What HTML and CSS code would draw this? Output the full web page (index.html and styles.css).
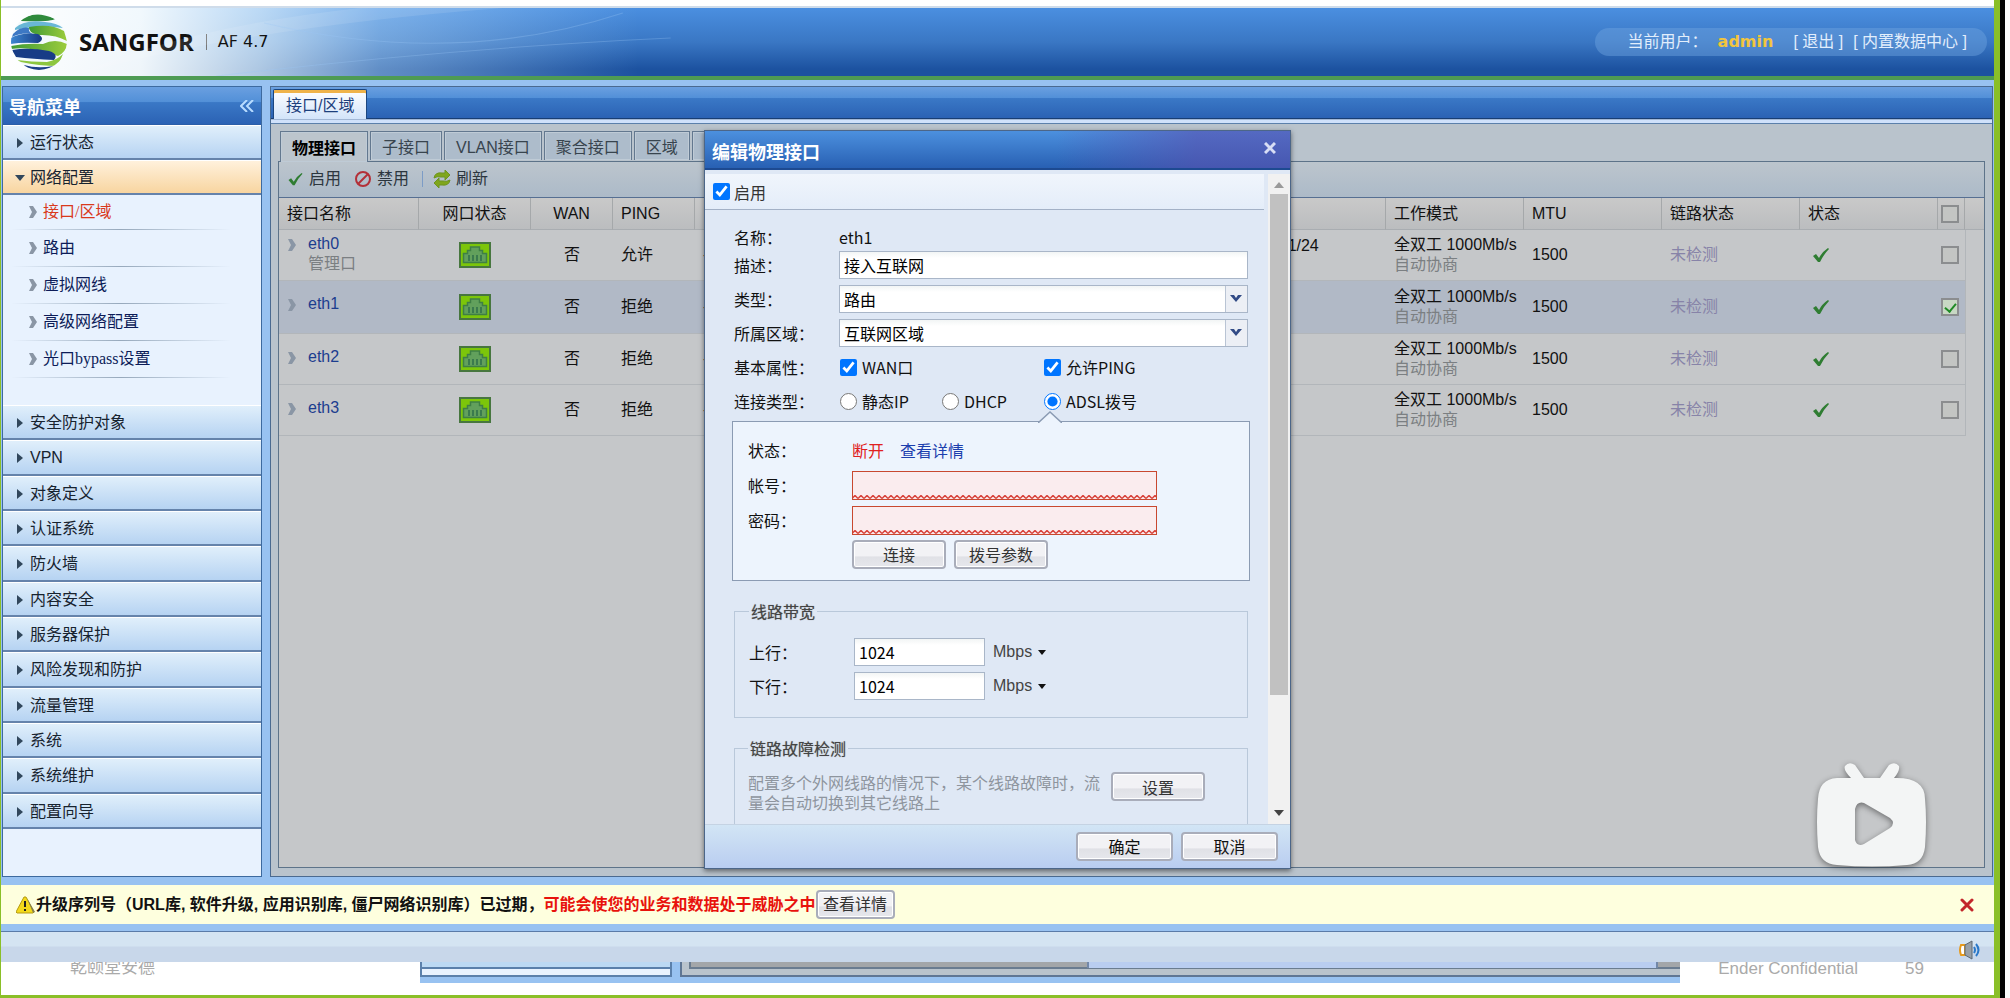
FILE: index.html
```html
<!DOCTYPE html>
<html lang="zh-CN">

<head>
    <meta charset="UTF-8">
    <title>SANGFOR AF 4.7</title>
    <link rel="stylesheet" href="styles.css">
</head>

<body>

    <!-- shared icons -->
    <svg class="sprite" aria-hidden="true">
        <symbol id="port" viewBox="0 0 32 26">
            <rect x="1" y="1" width="30" height="24" fill="#7cc60a" stroke="#47763f" stroke-width="2"/>
            <path d="M4.500 20.500v-9h4v-3h3v-3.500h9v3.500h3v3h4v9z" fill="#62a05c" stroke="#3f7f45" stroke-width="1.500"/>
            <path d="M10 13v6M14 13v6M18 13v6M22 13v6" stroke="#2f6d49" stroke-width="1.500"/>
        </symbol>
        <symbol id="tick" viewBox="0 0 18 16">
            <path d="M1 9l3-2 3 4q3-6 9-10l1 1q-5 5-9 13h-2z" fill="#2f7d32"/>
        </symbol>
        <symbol id="chevron" viewBox="0 0 8 12">
            <path d="M0 0h4l4 6-4 6h-4l3-6z" fill="#8a96a5"/>
        </symbol>
    </svg>

    <div class="app">
        <header class="top">
            <svg class="swoosh" viewBox="0 0 1000 68" preserveAspectRatio="none" aria-hidden="true">
                <path d="M60 68Q200 20 420 0H300Q150 20 60 68z" fill="#fff" opacity=".1"/>
                <path d="M220 15Q380 60 520 5M180 68Q380 40 560 30" fill="none" stroke="#9cc8f4" opacity=".3"/>
            </svg>
            <svg class="logo" viewBox="0 0 56 56" aria-hidden="true">
                <defs>
                    <clipPath id="ball"><circle cx="28" cy="28" r="28"/></clipPath>
                    <linearGradient id="blue"><stop offset="0" stop-color="#3d86d0"/><stop offset="1" stop-color="#173a86"/></linearGradient>
                    <linearGradient id="green"><stop offset="0" stop-color="#3f9a35"/><stop offset="1" stop-color="#9ccc3c"/></linearGradient>
                </defs>
                <g clip-path="url(#ball)">
                    <rect width="56" height="56" fill="#f4fafc"/>
                    <path d="M10 5Q25-4 44 5Q40 8 10 7z" fill="#2f8a3c"/>
                    <path d="M4 14Q14 5 34 8Q46 9 52 14Q30 10 4 16z" fill="#69b7d6"/>
                    <path d="M18 13Q40 9 53 17L56 27Q44 20 27 21Q17 18 18 13z" fill="url(#green)"/>
                    <path d="M2 20Q10 12 18 14Q17 18 22 20Q10 18 1 23z" fill="#3d78c4"/>
                    <path d="M0 24Q10 18 27 20Q35 25 27 29Q10 28 0 30z" fill="url(#blue)"/>
                    <path d="M0 32Q15 29 32 30Q44 24 56 30Q55 38 47 42Q38 39 26 36Q12 33 0 35z" fill="url(#green)"/>
                    <path d="M1 36Q18 33 38 37Q48 40 43 46Q22 45 5 43z" fill="#183c86"/>
                    <path d="M6 46Q20 48 36 48Q46 46 52 40L47 52Q28 52 10 48z" fill="#8dc63f"/>
                    <path d="M13 51Q26 55 43 52L38 58H18z" fill="#1c3f88"/>
                </g>
            </svg>
            <h1>SANGFOR</h1>
            <span class="version">AF 4.7</span>
            <div class="user">
                <span class="who">当前用户：</span>
                <strong>admin</strong>
                <a href="#">[ 退出 ]</a><a href="#">[ 内置数据中心 ]</a>
            </div>
        </header>

        <div class="middle">
            <aside class="sidebar">
                <div class="side-title">
                    <h2>导航菜单</h2>
                    <button class="collapse" aria-label="收起">
                        <svg width="14" height="12" viewBox="0 0 14 12"><path d="M7 0L1 6l6 6M13 0L7 6l6 6" fill="none" stroke="#b8dcff" stroke-width="2"/></svg>
                    </button>
                </div>
                <nav>
                    <div class="menu">
                        <a class="menu-item" href="#">运行状态</a>
                        <a class="menu-item open" href="#">网络配置</a>
                    </div>
                    <ul class="submenu">
                        <li><svg class="chev"><use href="#chevron"/></svg><a class="current" href="#">接口/区域</a></li>
                        <li><svg class="chev"><use href="#chevron"/></svg><a href="#">路由</a></li>
                        <li><svg class="chev"><use href="#chevron"/></svg><a href="#">虚拟网线</a></li>
                        <li><svg class="chev"><use href="#chevron"/></svg><a href="#">高级网络配置</a></li>
                        <li><svg class="chev"><use href="#chevron"/></svg><a href="#">光口bypass设置</a></li>
                    </ul>
                    <div class="menu rest">
                        <a class="menu-item" href="#">安全防护对象</a>
                        <a class="menu-item" href="#">VPN</a>
                        <a class="menu-item" href="#">对象定义</a>
                        <a class="menu-item" href="#">认证系统</a>
                        <a class="menu-item" href="#">防火墙</a>
                        <a class="menu-item" href="#">内容安全</a>
                        <a class="menu-item" href="#">服务器保护</a>
                        <a class="menu-item" href="#">风险发现和防护</a>
                        <a class="menu-item" href="#">流量管理</a>
                        <a class="menu-item" href="#">系统</a>
                        <a class="menu-item" href="#">系统维护</a>
                        <a class="menu-item" href="#">配置向导</a>
                    </div>
                </nav>
            </aside>

            <main class="work">
                <div class="page-tabs"><button class="page-tab">接口/区域</button></div>
                <div class="content">
                    <div class="tabs">
                        <button class="tab active">物理接口</button>
                        <button class="tab">子接口</button>
                        <button class="tab">VLAN接口</button>
                        <button class="tab">聚合接口</button>
                        <button class="tab">区域</button>
                        <button class="tab" aria-label="更多"></button>
                    </div>
                    <section class="panel">
                        <div class="toolbar">
                            <button><svg width="17" height="14"><use href="#tick"/></svg>启用</button>
                            <button><svg width="18" height="18" viewBox="0 0 18 18"><circle cx="9" cy="9" r="7" fill="none" stroke="#b33038" stroke-width="2"/><path d="M4 14L14 4" stroke="#b33038" stroke-width="2"/></svg>禁用</button>
                            <span class="sep"></span>
                            <button><svg width="18" height="18" viewBox="0 0 18 18"><path d="M1 8Q2 2 9 3h3V0l5 5-5 5V7H8Q4 6 1 8z" fill="#7fa61c" stroke="#6d9420"/><path d="M17 10Q16 16 9 15H6v3l-5-5 5-5v3h4q4 1 7-1z" fill="#7fa61c" stroke="#6d9420"/></svg>刷新</button>
                        </div>
                        <table>
                            <colgroup>
                                <col class="c-name"><col class="c-port"><col class="c-wan"><col class="c-wan"><col><col class="c-ip">
                                <col class="c-mode"><col class="c-mode"><col class="c-mode"><col class="c-mode"><col class="c-check"><col class="c-end">
                            </colgroup>
                            <thead>
                                <tr>
                                    <th>接口名称</th>
                                    <th class="mid">网口状态</th>
                                    <th class="mid">WAN</th>
                                    <th>PING</th>
                                    <th></th>
                                    <th></th>
                                    <th>工作模式</th>
                                    <th>MTU</th>
                                    <th>链路状态</th>
                                    <th>状态</th>
                                    <th class="box"><input type="checkbox" aria-label="全选"></th>
                                    <th class="noline"></th>
                                </tr>
                            </thead>
                            <tbody>
                                <tr>
                                    <td class="name"><svg class="chev"><use href="#chevron"/></svg><a href="#">eth0</a><small>管理口</small></td>
                                    <td class="mid"><svg class="port"><use href="#port"/></svg></td>
                                    <td class="mid">否</td>
                                    <td>允许</td>
                                    <td>-</td>
                                    <td class="ip">192.168.1.1/24</td>
                                    <td class="mode">全双工 1000Mb/s<small>自动协商</small></td>
                                    <td>1500</td>
                                    <td class="unchecked">未检测</td>
                                    <td class="ok"><svg class="tick"><use href="#tick"/></svg></td>
                                    <td class="box"><input type="checkbox" aria-label="eth0"></td>
                                    <td class="end"></td>
                                </tr>
                                <tr class="selected">
                                    <td class="name"><svg class="chev"><use href="#chevron"/></svg><a href="#">eth1</a></td>
                                    <td class="mid"><svg class="port"><use href="#port"/></svg></td>
                                    <td class="mid">否</td>
                                    <td>拒绝</td>
                                    <td>-</td>
                                    <td class="ip"></td>
                                    <td class="mode">全双工 1000Mb/s<small>自动协商</small></td>
                                    <td>1500</td>
                                    <td class="unchecked">未检测</td>
                                    <td class="ok"><svg class="tick"><use href="#tick"/></svg></td>
                                    <td class="box"><input type="checkbox" aria-label="eth1" checked></td>
                                    <td class="end"></td>
                                </tr>
                                <tr>
                                    <td class="name"><svg class="chev"><use href="#chevron"/></svg><a href="#">eth2</a></td>
                                    <td class="mid"><svg class="port"><use href="#port"/></svg></td>
                                    <td class="mid">否</td>
                                    <td>拒绝</td>
                                    <td>-</td>
                                    <td class="ip"></td>
                                    <td class="mode">全双工 1000Mb/s<small>自动协商</small></td>
                                    <td>1500</td>
                                    <td class="unchecked">未检测</td>
                                    <td class="ok"><svg class="tick"><use href="#tick"/></svg></td>
                                    <td class="box"><input type="checkbox" aria-label="eth2"></td>
                                    <td class="end"></td>
                                </tr>
                                <tr>
                                    <td class="name"><svg class="chev"><use href="#chevron"/></svg><a href="#">eth3</a></td>
                                    <td class="mid"><svg class="port"><use href="#port"/></svg></td>
                                    <td class="mid">否</td>
                                    <td>拒绝</td>
                                    <td>-</td>
                                    <td class="ip"></td>
                                    <td class="mode">全双工 1000Mb/s<small>自动协商</small></td>
                                    <td>1500</td>
                                    <td class="unchecked">未检测</td>
                                    <td class="ok"><svg class="tick"><use href="#tick"/></svg></td>
                                    <td class="box"><input type="checkbox" aria-label="eth3"></td>
                                    <td class="end"></td>
                                </tr>
                            </tbody>
                        </table>
                    </section>
                </div>
                <svg class="tv" viewBox="0 0 110 104" aria-hidden="true">
                    <path fill-rule="evenodd" d="M28 3Q32-2 38 2L47 15H63L72 2Q78-2 82 3Q83 8 77 15Q108 14 108 36Q110 58 108 84Q106 101 90 102Q55 105 20 102Q3 101 1 84Q-1 58 1 36Q2 16 20 15L34 15Q26 7 28 3zM38 46V77Q40 84 47 81L73 65Q79 60 73 55L47 40Q40 38 38 46z" fill="#f3f5f5"/>
                </svg>
            </main>
        </div>

        <div class="notice">
            <svg width="20" height="18" viewBox="0 0 20 18" aria-hidden="true"><path d="M8 1h2l8 15-1 1H1l-1-1z" fill="#f3d91c" stroke="#b49a12"/><path d="M11 2l8 14-2 1z" fill="#86804a"/><path d="M9 5v6M9 13v2" stroke="#222" stroke-width="2"/></svg>
            <b>升级序列号（URL库, 软件升级, 应用识别库, 僵尸网络识别库）已过期，</b>
            <b class="alert">可能会使您的业务和数据处于威胁之中</b>
            <button class="btn">查看详情</button>
            <button class="close" aria-label="关闭"><svg width="14" height="14" viewBox="0 0 14 14"><path d="M2 2l10 10M12 2L2 12" stroke="#c3272b" stroke-width="3" stroke-linecap="round"/></svg></button>
        </div>

        <div class="status">
            <svg width="22" height="20" viewBox="0 0 22 20" aria-hidden="true"><path d="M2 5H6V15H2Q0 10 2 5z" fill="#fff" stroke="#e79a1c" stroke-width="2"/><path d="M6 5L13 1V19L6 15z" fill="#98a0a8" stroke="#5d6872"/><path d="M15 7q2 3 0 6M17 4q5 6 0 12" fill="none" stroke="#2a78c8" stroke-width="2"/></svg>
        </div>

        <footer>
            <span class="author">乾颐堂安德</span>
            <div class="under">
                <div class="under-side"></div>
                <div class="under-main"><div class="under-panel"><i></i></div></div>
            </div>
            <span class="secret">Ender Confidential</span>
            <span class="page">59</span>
        </footer>

        <div class="overlay">
            <form class="modal">
                <div class="modal-title">
                    <h2>编辑物理接口</h2>
                    <button type="button" aria-label="关闭"><svg width="12" height="12" viewBox="0 0 12 12"><path d="M1 1l10 10M11 1L1 11" stroke="#d8def5" stroke-width="3"/></svg></button>
                </div>
                <div class="modal-body">
                    <div class="scroll">
                        <label class="enable"><input type="checkbox" checked>启用</label>
                        <div class="form">
                            <div class="row short"><span class="label">名称：</span><span>eth1</span></div>
                            <div class="row"><label class="label" for="desc">描述：</label><input class="field" id="desc" type="text" value="接入互联网"></div>
                            <div class="row"><label class="label" for="type">类型：</label><select class="field" id="type"><option>路由</option></select></div>
                            <div class="row"><label class="label" for="zone">所属区域：</label><select class="field" id="zone"><option>互联网区域</option></select></div>
                            <div class="row"><span class="label">基本属性：</span><div class="options">
                                <label class="wide"><input type="checkbox" checked>WAN口</label>
                                <label><input type="checkbox" checked>允许PING</label>
                            </div></div>
                            <div class="row"><span class="label">连接类型：</span><div class="options">
                                <label><input type="radio" name="link">静态IP</label>
                                <label><input type="radio" name="link">DHCP</label>
                                <label><input type="radio" name="link" checked>ADSL拨号</label>
                            </div></div>

                            <div class="adsl">
                                <svg class="pointer" width="24" height="12" viewBox="0 0 24 12" aria-hidden="true"><path d="M0 12L12 1l12 11" fill="#edf4fd" stroke="#8b9bb3" stroke-width="1.500"/></svg>
                                <div class="row"><span class="label">状态：</span><span class="broken">断开</span><a href="#">查看详情</a></div>
                                <div class="row"><label class="label" for="account">帐号：</label><input class="bad" id="account" type="text"></div>
                                <div class="row"><label class="label" for="password">密码：</label><input class="bad" id="password" type="password"></div>
                                <div class="row buttons"><button class="btn" type="button">连接</button><button class="btn" type="button">拨号参数</button></div>
                            </div>

                            <fieldset>
                                <legend>线路带宽</legend>
                                <div class="row"><label class="label" for="up">上行：</label><input class="rate" id="up" type="text" value="1024"><button class="unit" type="button">Mbps</button></div>
                                <div class="row"><label class="label" for="down">下行：</label><input class="rate" id="down" type="text" value="1024"><button class="unit" type="button">Mbps</button></div>
                            </fieldset>

                            <fieldset class="detect">
                                <legend>链路故障检测</legend>
                                <p>配置多个外网线路的情况下，某个线路故障时，流量会自动切换到其它线路上</p>
                                <button class="btn" type="button">设置</button>
                            </fieldset>
                        </div>
                    </div>
                    <div class="scrollbar" aria-hidden="true"><i class="up"></i><i class="thumb"></i><i class="down"></i></div>
                </div>
                <div class="modal-foot">
                    <button class="btn" type="button">确定</button>
                    <button class="btn" type="button">取消</button>
                </div>
            </form>
        </div>
    </div>

</body>

</html>
```
FILE: styles.css
```css
* {
    box-sizing: border-box;
}

body {
    margin: 0;
    padding-right: 5px;
    height: 100vh;
    overflow: hidden;
    background-color: #fafafa;
    font: 16px/20px "Liberation Sans", "Noto Sans CJK SC", sans-serif;
    color: #111;
}

h1, h2, p, ul {
    margin: 0;
    padding: 0;
}

a {
    color: inherit;
    text-decoration: none;
}

button {
    padding: 0;
    border: 0;
    background: none;
    font: inherit;
    color: inherit;
}

svg {
    display: block;
}

.sprite {
    position: absolute;
    width: 0;
    height: 0;
}

.app {
    position: relative;
    display: flex;
    flex-direction: column;
    height: 100vh;
    margin-right: 5px;
    padding-top: 6px;
    background-color: #fff;
    border: 0 solid #8abf28;
    border-width: 0 6px 3px 1px;
    box-shadow: 5px 0 #000;
}

/* header */
.top {
    position: relative;
    display: flex;
    align-items: center;
    height: 74px;
    padding: 0 7px 0 10px;
    border-top: 2px solid #cfdcea;
    border-bottom: 4px solid #4e9b54;
    background: linear-gradient(90deg, #fff 0, rgba(250, 254, 255, .95) 7%, rgba(235, 249, 255, .7) 13%, rgba(200, 232, 255, .4) 19%, rgba(160, 210, 255, 0) 32%), linear-gradient(#4b8fe0, #3a77c4 50%, #1c52a0 90%);
}

.swoosh {
    position: absolute;
    left: 0;
    top: 0;
    width: 60%;
    height: 100%;
}

.logo {
    width: 56px;
    height: 56px;
}

h1 {
    margin: 0 12px;
    font: bold 24px/32px "Open Sans", sans-serif;
}

.version {
    padding-left: 11px;
    border-left: 1px solid #777;
    font: 16px/16px "DejaVu Sans", sans-serif;
}

.user {
    display: flex;
    align-items: center;
    gap: 10px;
    height: 28px;
    margin-left: auto;
    padding: 0 20px 0 33px;
    border-radius: 14px;
    background-color: rgba(110, 165, 225, .45);
    color: #e2eefc;
}

.user strong {
    margin-right: 10px;
    font: bold 16px/20px "DejaVu Sans", sans-serif;
    color: #f2c53d;
}

/* columns */
.middle {
    flex: 1;
    display: flex;
    gap: 8px;
    min-height: 0;
    padding: 6px 1px 8px;
    background-color: #98c2f1;
}

.sidebar {
    width: 260px;
    border: 1px solid #3d6a9f;
    background-color: #e8f2fe;
}

.side-title {
    display: flex;
    align-items: center;
    justify-content: space-between;
    height: 38px;
    padding: 5px 7px 0 6px;
    background: linear-gradient(#6a9fe0, #5290d8 40%, #3a78c6 42%, #2b62b4);
    border-bottom: 1px solid #2b5ea8;
}

h2 {
    font-size: 18px;
    line-height: 24px;
    color: #fff;
}

.collapse {
    margin-bottom: 5px;
}

.menu {
    display: grid;
    grid-auto-rows: 35px;
}

.menu.rest {
    height: 424px;
    grid-auto-rows: 1fr;
}

.menu-item {
    display: flex;
    align-items: center;
    gap: 7px;
    padding: 2px 0 0 14px;
    border-top: 1px solid #fff;
    border-bottom: 2px solid #6583ab;
    background: linear-gradient(#e0effb, #b6d3f2);
    color: #17232f;
}

.menu-item::before {
    content: "";
    border: 5px solid transparent;
    border-left: 6px solid #31475c;
    border-right: 0;
}

.menu-item.open {
    gap: 5px;
    padding-left: 12px;
    background: linear-gradient(#fff1dc, #f8d5a0);
}

.menu-item.open::before {
    border: 5px solid transparent;
    border-top: 6px solid #31475c;
    border-bottom: 0;
}

.submenu {
    height: 210px;
    padding-left: 9px;
    list-style: none;
    font-family: "Liberation Serif", "Noto Sans CJK SC", serif;
    color: #0c1c58;
}

.submenu li {
    display: flex;
    align-items: center;
    gap: 6px;
    width: 218px;
    height: 37px;
    padding-left: 17px;
    border-bottom: 1px solid;
    border-image: linear-gradient(90deg, #e8f2fe, #97a9bc 50%, #e8f2fe) 1;
}

.submenu li:first-child {
    height: 35px;
}

.submenu .current {
    color: #d9391c;
}

.chev {
    width: 8px;
    height: 12px;
}

/* work area */
.work {
    position: relative;
    flex: 1;
    display: flex;
    flex-direction: column;
    min-width: 0;
    border: 1px solid #4a6a90;
    background-color: #b9c3cc;
}

.page-tabs {
    display: flex;
    align-items: flex-end;
    height: 37px;
    padding: 0 2px 4px;
    background: linear-gradient(#6a9fe0, #5290d8 30%, #3a78c6 32%, #2b62b4 86%, #12315e 88%, #cfe1fb 91%);
    border-bottom: 1px solid #5b80ab;
}

.page-tab {
    height: 30px;
    padding: 2px 12px 0;
    border: 1px solid #1b4680;
    border-bottom: 0;
    border-radius: 2px 2px 0 0;
    box-shadow: inset 0 3px #efb34a;
    background: linear-gradient(#fff, #d3e4fa);
    color: #1c3f7c;
}

.content {
    flex: 1;
    display: flex;
    flex-direction: column;
    padding: 7px 7px 8px;
}

.tabs {
    display: flex;
    gap: 2px;
    height: 30px;
    padding-left: 2px;
}

.tab {
    height: 29px;
    padding: 4px 11px 0;
    border: 1px solid #63788f;
    border-bottom: 0;
    background-color: #adbccb;
    box-shadow: inset 0 0 0 1px #bfcbd6;
    color: #38444e;
}

.tab.active {
    height: 31px;
    position: relative;
    background-color: #bcc5cd;
    font-weight: bold;
    color: #000;
}

.panel {
    flex: 1;
    border: 1px solid #5d7389;
    background-color: #c5c7c9;
}

.toolbar {
    display: flex;
    align-items: center;
    gap: 13px;
    height: 36px;
    padding: 0 0 2px 8px;
    border-bottom: 1px solid #566f92;
    background: linear-gradient(#bcc5cd, #acbac8);
    color: #2c363e;
}

.toolbar button {
    display: flex;
    align-items: center;
    gap: 5px;
}

.sep {
    width: 1px;
    height: 16px;
    margin-right: -3px;
    background-color: #7c9cc6;
}

table {
    width: 100%;
    table-layout: fixed;
    border-collapse: separate;
    border-spacing: 0;
}

.c-name {
    width: 140px;
}

.c-port {
    width: 112px;
}

.c-wan {
    width: 82px;
}

.c-ip {
    width: 182px;
}

.c-mode {
    width: 138px;
}

.c-check {
    width: 27px;
}

.c-end {
    width: 19px;
}

th {
    height: 32px;
    padding: 0 0 0 8px;
    border-right: 1px solid #a5a8aa;
    border-bottom: 1px solid #a9adb1;
    background: linear-gradient(#c9c9c9, #bbbdbf);
    font-weight: normal;
    text-align: left;
}

.noline {
    border-right: 0;
}

td {
    height: 51px;
    padding: 0 0 0 8px;
    border-bottom: 1px solid #b2b6ba;
}

.selected td {
    height: 53px;
    background-color: #b1b9c6;
}

td.end,
.selected td.end {
    border: 0;
    border-left: 1px solid #b2b6ba;
    background: none;
}

.mid {
    padding-left: 0;
    text-align: center;
}

.name {
    padding: 4px 0 0 29px;
    vertical-align: top;
    color: #1c3d8f;
}

.selected .name,
.selected ~ tr .name {
    padding-top: 13px;
}

.name .chev {
    float: left;
    margin: 5px 0 0 -20px;
}

small {
    display: block;
    font-size: 16px;
    color: #7b7f82;
}

.port {
    width: 32px;
    height: 26px;
    margin: auto;
}

.ip {
    padding-bottom: 18px;
}

.mode {
    white-space: nowrap;
}

.unchecked {
    color: #8783a8;
}

.ok {
    padding-left: 12px;
}

.tick {
    width: 18px;
    height: 16px;
}

.box {
    padding: 0 0 0 3px;
}

.box input {
    appearance: none;
    display: block;
    width: 18px;
    height: 18px;
    margin: 0;
    border: 2px solid #8b8d8f;
    background-color: #c3c5c3;
}

.box input:checked {
    background-color: #c8d8c4;
}

.box input:checked::before {
    content: "";
    display: block;
    width: 5px;
    height: 9px;
    margin: 1px 0 0 4px;
    border: solid #1f8a25;
    border-width: 0 2px 2px 0;
    rotate: 40deg;
}

.tv {
    position: absolute;
    right: 65px;
    bottom: 9px;
    width: 110px;
    height: 104px;
    filter: drop-shadow(0 2px 3px rgba(0, 0, 0, .45));
}

/* bottom bars */
.notice {
    display: flex;
    align-items: center;
    height: 39px;
    padding: 0 20px 0 15px;
    background-color: #feffde;
}

.notice .alert {
    color: #e8120c;
}

.notice .btn {
    width: 79px;
}

.notice .close {
    margin-left: auto;
}

.status {
    display: flex;
    align-items: center;
    justify-content: flex-end;
    height: 38px;
    padding: 6px 13px 0 0;
    border-top: 7px solid #98c2f1;
    background: linear-gradient(#5a7ba8 1px, #d4e4f2 1px, #d4e4f2 15px, #c8d7ea 16px);
}

footer {
    display: flex;
    height: 33px;
    overflow: hidden;
    font-size: 17px;
    color: #aaa;
}

.author {
    width: 21%;
    padding-left: 69px;
    line-height: 12px;
}

.under {
    flex: 1;
    display: flex;
    gap: 8px;
    height: 21px;
    margin-right: 38px;
    padding-bottom: 6px;
    background-color: #98c2f1;
}

.under-side {
    width: 20%;
    border: 2px solid #5b80ab;
    border-top: 0;
    background: linear-gradient(#bcd9f3 5px, #5b80ab 5px, #5b80ab 7px, #e8f2fe 7px);
}

.under-main {
    flex: 1;
    padding-left: 7px;
    border: solid #5f7694;
    border-width: 0 0 2px 2px;
    background-color: #b9c3cc;
}

.under-panel {
    height: 7px;
    padding: 0 22px 0 0;
    border: solid #6a7c90;
    border-width: 0 0 2px 2px;
    background-color: #a3a6a9;
}

.under-panel i {
    display: block;
    width: 59%;
    height: 6px;
    margin-left: auto;
    border: solid #7388a8;
    border-width: 0 2px;
    background-color: #b9cdf0;
}

.secret {
    line-height: 14px;
}

.page {
    margin-left: 47px;
    padding-right: 70px;
    line-height: 14px;
}

/* buttons */
.btn {
    height: 29px;
    border: 2px solid #a9adba;
    border-radius: 4px;
    box-shadow: inset 0 0 0 1px #fff;
    background: linear-gradient(#f2f2f5 55%, #e0e1e6 60%, #e6e7ec);
    color: #333;
}

/* dialog */
.overlay {
    position: absolute;
    inset: 0;
    display: flex;
    align-items: center;
    justify-content: center;
    pointer-events: none;
}

.modal {
    display: flex;
    flex-direction: column;
    width: 587px;
    height: 74vh;
    margin-top: 4px;
    border: 1px solid #4c6688;
    background-color: #dfe8f5;
    box-shadow: 0 2px 5px rgba(0, 0, 0, .5);
    font-family: "Noto Sans CJK SC", sans-serif;
    pointer-events: auto;
}

.modal-title {
    display: flex;
    align-items: center;
    justify-content: space-between;
    height: 39px;
    padding: 2px 14px 0 7px;
    border-bottom: 2px solid #1d4a91;
    background: linear-gradient(90deg, rgba(90, 80, 175, 0) 60%, rgba(90, 80, 175, .6) 84%), linear-gradient(#4c90de, #2860b3);
}

.modal-title button {
    margin-bottom: 6px;
}

.modal-body {
    flex: 1;
    display: flex;
    min-height: 0;
    padding-top: 4px;
    border-bottom: 1px solid #c5d3e3;
}

.scroll {
    flex: 1;
    overflow: hidden;
    padding-right: 4px;
}

.modal input[type="checkbox"],
.modal input[type="radio"] {
    width: 17px;
    height: 17px;
    margin: 0;
    accent-color: #0075ff;
}

.enable {
    display: flex;
    align-items: center;
    gap: 4px;
    height: 36px;
    padding-left: 8px;
    border-bottom: 1px solid #a3b1c6;
    background: linear-gradient(#f0f5fc, #e4edf9);
    color: #333;
}

.form {
    display: flex;
    flex-direction: column;
    gap: 6px;
    padding: 17px 16px 0 29px;
}

.row {
    display: flex;
    align-items: center;
    height: 28px;
}

.row.short {
    height: 20px;
    margin-bottom: -2px;
}

.label {
    width: 105px;
}

.field,
.rate {
    flex: 1;
    min-width: 0;
    height: 28px;
    padding: 0 4px;
    border: 1px solid #a9b6c8;
    border-radius: 0;
    background: linear-gradient(#f2f5f5, #fff 6px);
    font: inherit;
    color: #000;
}

select.field {
    appearance: none;
    padding-right: 24px;
    background:
        url("data:image/svg+xml,%3Csvg xmlns='http://www.w3.org/2000/svg' width='22' height='26'%3E%3Cpath d='M0 0h22v26H0z' fill='%23eceff5'/%3E%3Cpath d='M.5 0v26' stroke='%23b9c4d4'/%3E%3Cpath d='M5 9h4l2 3 2-3h4l-6 7z' fill='%23324b86'/%3E%3C/svg%3E") right / 22px 26px no-repeat,
        linear-gradient(#f2f5f5, #fff 6px);
}

.options {
    flex: 1;
    display: grid;
    grid-template-columns: 102px 102px 1fr;
    padding-left: 1px;
}

.options label {
    display: flex;
    align-items: center;
    gap: 5px;
}

.options .wide {
    grid-column: span 2;
}

.adsl {
    position: relative;
    display: flex;
    flex-direction: column;
    gap: 5px;
    height: 160px;
    margin: 0 -2px;
    padding: 13px 15px 0 15px;
    border: 1px solid #8b9bb3;
    background-color: #edf4fd;
}

.pointer {
    position: absolute;
    top: -11px;
    left: 305px;
}

.adsl .row {
    height: 30px;
}

.adsl .label {
    width: 104px;
}

.broken {
    margin-right: 16px;
    color: #e02020;
}

.adsl a {
    color: #1c3fae;
}

.bad {
    width: 305px;
    height: 29px;
    padding: 0 4px 4px;
    border: 1px solid #c8482f;
    background: url("data:image/svg+xml,%3Csvg xmlns='http://www.w3.org/2000/svg' width='6' height='4'%3E%3Cpath d='M0 3.500l3-3 3 3' fill='none' stroke='%23d8433c' stroke-width='1.500'/%3E%3C/svg%3E") bottom repeat-x #faecee;
    font: inherit;
}

.adsl .buttons {
    gap: 8px;
    height: 28px;
    padding-left: 104px;
}

.buttons .btn {
    width: 94px;
}

fieldset {
    min-width: 0;
    margin: 14px 0 0;
    padding: 17px 14px 17px;
    border: 1px solid #b9c8da;
}

legend {
    padding: 0 2px;
    color: #444;
    text-shadow: 0 0 1px #888;
}

fieldset .row + .row {
    margin-top: 6px;
}

.rate {
    flex: none;
    width: 131px;
}

.unit {
    display: flex;
    align-items: center;
    gap: 6px;
    padding-left: 8px;
    font-family: "Liberation Sans", sans-serif;
    color: #444;
}

.unit::after {
    content: "";
    border: 4px solid transparent;
    border-top: 5px solid #111;
    border-bottom: 0;
}

.detect {
    display: flex;
    gap: 11px;
    height: 110px;
    padding: 14px 13px;
}

.detect p {
    width: 352px;
    color: #8e959e;
}

.detect .btn {
    width: 94px;
}

.scrollbar {
    display: flex;
    flex-direction: column;
    align-items: center;
    width: 22px;
    padding: 8px 0;
    background-color: #f1f1f1;
}

.scrollbar .up {
    border: 5px solid transparent;
    border-top: 0;
    border-bottom: 6px solid #9a9a9a;
}

.scrollbar .thumb {
    width: 18px;
    height: 79%;
    margin: 6px 0 auto;
    background-color: #c1c1c1;
}

.scrollbar .down {
    border: 5px solid transparent;
    border-top: 6px solid #444;
    border-bottom: 0;
}

.modal-foot {
    display: flex;
    align-items: center;
    justify-content: flex-end;
    gap: 8px;
    height: 43px;
    padding: 0 12px;
    background: linear-gradient(#d2e5f5, #b9cdf0);
}

.modal-foot .btn {
    width: 97px;
    color: #111;
}
```
